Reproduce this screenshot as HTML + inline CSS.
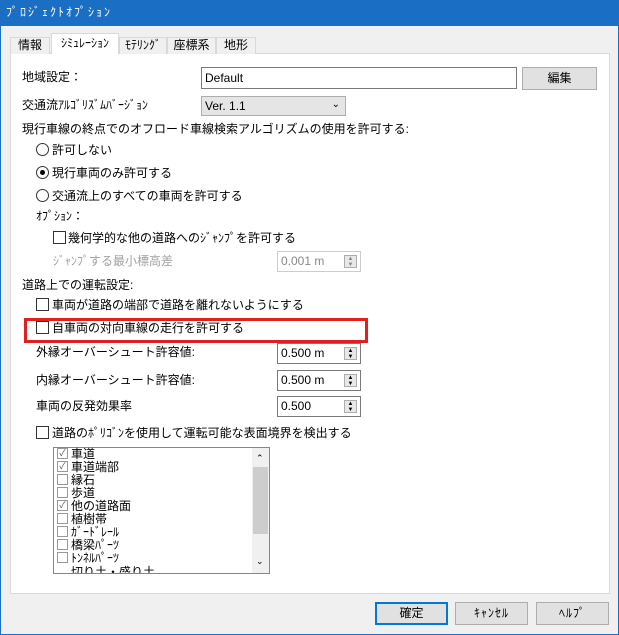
<!DOCTYPE html>
<html><head><meta charset="utf-8"><style>
*{box-sizing:border-box;margin:0;padding:0}
body{width:619px;height:635px;background:#f0f0f0;font-family:"Liberation Sans","Noto Sans CJK JP",sans-serif;font-size:12px;color:#000;position:relative;overflow:hidden}
.a{position:absolute;white-space:nowrap;line-height:14px}
.title{left:0;top:0;width:619px;height:26px;background:#1a6fc4;color:#fff;padding:5px 6px;font-size:12px;letter-spacing:2px}
.frame{position:absolute;left:0;top:0;width:619px;height:635px;border:1px solid #1a6fc4;pointer-events:none}
.tab{position:absolute;top:37px;height:17px;border:1px solid #d9d9d9;border-bottom:none;background:#f0f0f0;text-align:center;line-height:15px}
.panel{position:absolute;left:10px;top:53px;width:600px;height:541px;background:#fff;border:1px solid #d9d9d9}
.btn{position:absolute;background:#e1e1e1;border:1px solid #adadad;text-align:center}
.radio{position:absolute;width:13px;height:13px;border:1px solid #333;border-radius:50%;background:#fff}
.cb{position:absolute;width:13px;height:13px;border:1px solid #333;background:#fff}
.spin{position:absolute;width:84px;height:21px;border:1px solid #7a7a7a;background:#fff;padding:2px 3px;line-height:15px}
.spin i{position:absolute;right:3px;top:3px;width:13px;height:13px;border:1px solid #adadad;background:#e8e8e8;font-style:normal;font-size:6px;line-height:6px;text-align:center}
.lc{position:absolute;left:57px;width:11px;height:11px;border:1px solid #999;background:#fff;font-size:9px;line-height:9px;color:#555;text-align:center}
</style></head><body>
<div class="a title">ﾌﾟﾛｼﾞｪｸﾄｵﾌﾟｼｮﾝ</div>
<div class="panel"></div>
<div class="tab" style="left:10px;width:40px">情報</div>
<div class="tab" style="left:51px;top:33px;height:21px;width:68px;background:#fff;line-height:19px">ｼﾐｭﾚｰｼｮﾝ</div>
<div class="tab" style="left:119px;width:48px">ﾓﾃﾘﾝｸﾞ</div>
<div class="tab" style="left:167px;width:49px">座標系</div>
<div class="tab" style="left:216px;width:40px">地形</div>

<div class="a" style="left:22px;top:70px">地域設定：</div>
<div class="a" style="left:201px;top:67px;width:316px;height:22px;border:1px solid #7a7a7a;background:#fff;padding:3px 3px">Default</div>
<div class="btn" style="left:522px;top:67px;width:75px;height:23px;line-height:21px">編集</div>
<div class="a" style="left:22px;top:98px">交通流ｱﾙｺﾞﾘｽﾞﾑﾊﾞｰｼﾞｮﾝ</div>
<div class="a" style="left:201px;top:96px;width:145px;height:20px;border:1px solid #adadad;background:#e5e5e5;padding:2px 3px">Ver. 1.1<span style="position:absolute;right:5px;top:1px;font-size:10px">&#8964;</span></div>
<div class="a" style="left:22px;top:122px">現行車線の終点でのオフロード車線検索アルゴリズムの使用を許可する:</div>
<div class="radio" style="left:36px;top:143px"></div><div class="a" style="left:52px;top:143px">許可しない</div>
<div class="radio" style="left:36px;top:166px"><div style="position:absolute;left:3px;top:3px;width:5px;height:5px;border-radius:50%;background:#000"></div></div><div class="a" style="left:52px;top:166px">現行車両のみ許可する</div>
<div class="radio" style="left:36px;top:189px"></div><div class="a" style="left:52px;top:189px">交通流上のすべての車両を許可する</div>
<div class="a" style="left:36px;top:209px">ｵﾌﾟｼｮﾝ：</div>
<div class="cb" style="left:53px;top:231px"></div><div class="a" style="left:68px;top:231px">幾何学的な他の道路へのｼﾞｬﾝﾌﾟを許可する</div>
<div class="a" style="left:53px;top:254px;color:#a0a0a0">ｼﾞｬﾝﾌﾟする最小標高差</div>
<div class="spin" style="left:277px;top:251px;border-color:#ccc;color:#888">0.001 m<i>▲<br>▼</i></div>
<div class="a" style="left:22px;top:278px">道路上での運転設定:</div>
<div class="cb" style="left:36px;top:298px"></div><div class="a" style="left:52px;top:298px">車両が道路の端部で道路を離れないようにする</div>
<div class="a" style="left:24px;top:318px;width:344px;height:25px;border:3px solid #e02020"></div>
<div class="cb" style="left:36px;top:321px"></div><div class="a" style="left:52px;top:321px">自車両の対向車線の走行を許可する</div>
<div class="a" style="left:36px;top:345px">外縁オーバーシュート許容値:</div>
<div class="spin" style="left:277px;top:343px">0.500 m<i>▲<br>▼</i></div>
<div class="a" style="left:36px;top:373px">内縁オーバーシュート許容値:</div>
<div class="spin" style="left:277px;top:370px">0.500 m<i>▲<br>▼</i></div>
<div class="a" style="left:36px;top:399px">車両の反発効果率</div>
<div class="spin" style="left:277px;top:396px">0.500<i>▲<br>▼</i></div>
<div class="cb" style="left:36px;top:426px"></div><div class="a" style="left:52px;top:426px">道路のﾎﾟﾘｺﾞﾝを使用して運転可能な表面境界を検出する</div>
<div class="a" style="left:53px;top:447px;width:217px;height:127px;border:1px solid #828790;background:#fff;overflow:hidden">
<div style="position:absolute;left:198px;top:0;width:17px;height:125px;background:#f0f0f0"><div style="position:absolute;left:1px;top:19px;width:15px;height:67px;background:#cdcdcd"></div><div style="position:absolute;left:4px;top:3px;font-size:9px">&#8963;</div><div style="position:absolute;left:4px;top:106px;font-size:9px">&#8964;</div></div>
</div>
<div class="lc" style="top:448px">✓</div><div class="a" style="left:71px;top:447px">車道</div>
<div class="lc" style="top:461px">✓</div><div class="a" style="left:71px;top:460px">車道端部</div>
<div class="lc" style="top:474px"></div><div class="a" style="left:71px;top:473px">縁石</div>
<div class="lc" style="top:487px"></div><div class="a" style="left:71px;top:486px">歩道</div>
<div class="lc" style="top:500px">✓</div><div class="a" style="left:71px;top:499px">他の道路面</div>
<div class="lc" style="top:513px"></div><div class="a" style="left:71px;top:512px">植樹帯</div>
<div class="lc" style="top:526px"></div><div class="a" style="left:71px;top:525px">ｶﾞｰﾄﾞﾚｰﾙ</div>
<div class="lc" style="top:539px"></div><div class="a" style="left:71px;top:538px">橋梁ﾊﾟｰﾂ</div>
<div class="lc" style="top:552px"></div><div class="a" style="left:71px;top:551px">ﾄﾝﾈﾙﾊﾟｰﾂ</div>
<div class="a" style="left:54px;top:565px;width:198px;height:8px;overflow:hidden"><span style="position:absolute;left:17px;top:0">切り土・盛り土</span></div>
<div class="btn" style="left:375px;top:602px;width:73px;height:23px;line-height:19px;border:2px solid #0078d7">確定</div>
<div class="btn" style="left:455px;top:602px;width:73px;height:23px;line-height:21px;letter-spacing:1px">ｷｬﾝｾﾙ</div>
<div class="btn" style="left:536px;top:602px;width:73px;height:23px;line-height:21px;letter-spacing:1px">ﾍﾙﾌﾟ</div>
<div class="frame"></div>
</body></html>
